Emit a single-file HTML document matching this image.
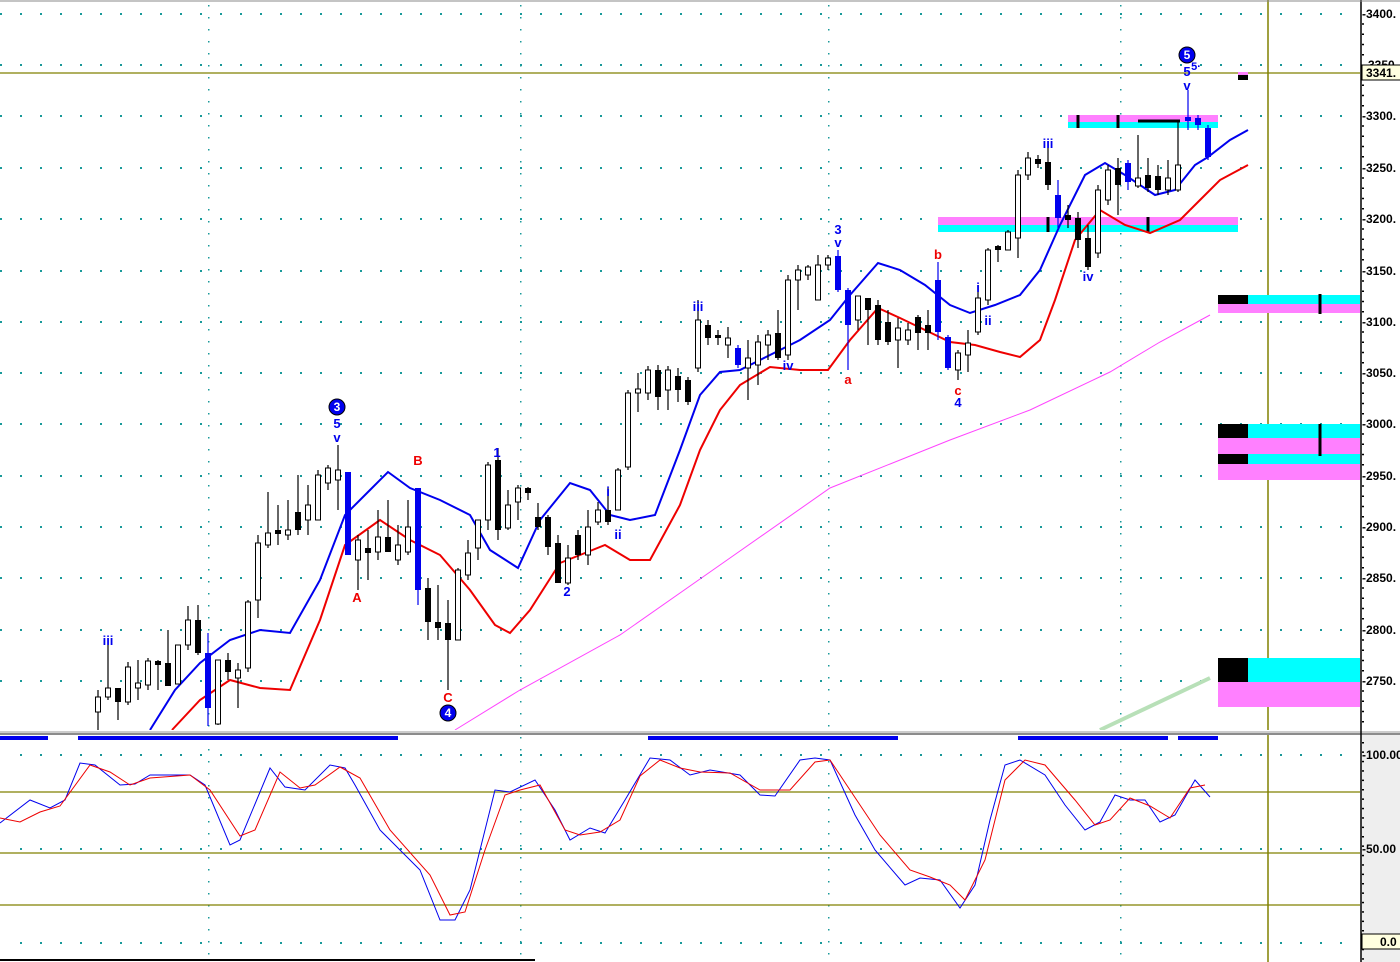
<!DOCTYPE html>
<html><head><meta charset="utf-8"><style>
html,body{margin:0;padding:0;background:#fff;}
svg{display:block;font-family:"Liberation Sans",sans-serif;}
</style></head><body>
<svg id="s" width="1400" height="962" xmlns="http://www.w3.org/2000/svg">
<defs>
<pattern id="dh" width="20" height="2" patternUnits="userSpaceOnUse"><rect x="0" y="0" width="2" height="2" fill="#1a9a9a"/></pattern>
</defs>
<rect x="0" y="0" width="1400" height="962" fill="#fff"/>
<rect x="1361" y="735" width="39" height="227" fill="#eeeeee"/>
<g id="grid"></g>
<line x1="1268" y1="0" x2="1268" y2="962" stroke="#808000" stroke-width="1.5"/>
<line x1="0" y1="73" x2="1360" y2="73" stroke="#808000" stroke-width="1.2"/>
<line x1="0" y1="792" x2="1360" y2="792" stroke="#808000" stroke-width="1.2"/>
<line x1="0" y1="853" x2="1360" y2="853" stroke="#808000" stroke-width="1.2"/>
<line x1="0" y1="905" x2="1360" y2="905" stroke="#808000" stroke-width="1.2"/>
<!-- zones -->
<rect x="1068" y="115" width="150" height="7" fill="#ff80ff"/><rect x="1068" y="122" width="150" height="6" fill="#00ffff"/>
<rect x="938" y="217" width="300" height="8" fill="#ff80ff"/><rect x="938" y="225" width="300" height="7" fill="#00ffff"/>
<rect x="1238" y="72" width="10" height="3" fill="#ff80ff"/><rect x="1238" y="75" width="10" height="5" fill="#000"/>
<rect x="1218" y="295" width="142" height="9" fill="#00ffff"/><rect x="1218" y="295" width="30" height="9" fill="#000"/><rect x="1218" y="304" width="142" height="9" fill="#ff80ff"/>
<rect x="1218" y="424" width="142" height="14" fill="#00ffff"/><rect x="1218" y="424" width="30" height="14" fill="#000"/><rect x="1218" y="438" width="142" height="16" fill="#ff80ff"/>
<rect x="1218" y="454" width="142" height="10" fill="#00ffff"/><rect x="1218" y="454" width="30" height="10" fill="#000"/><rect x="1218" y="464" width="142" height="16" fill="#ff80ff"/>
<rect x="1218" y="658" width="142" height="24" fill="#00ffff"/><rect x="1218" y="658" width="30" height="24" fill="#000"/><rect x="1218" y="682" width="142" height="25" fill="#ff80ff"/>
<line x1="1320" y1="294" x2="1320" y2="314" stroke="#000" stroke-width="3"/>
<line x1="1320" y1="424" x2="1320" y2="456" stroke="#000" stroke-width="3"/>
<g stroke="#000" stroke-width="3"><line x1="1078" y1="115" x2="1078" y2="128"/><line x1="1118" y1="115" x2="1118" y2="128"/><line x1="1048" y1="217" x2="1048" y2="232"/><line x1="1148" y1="217" x2="1148" y2="232"/><line x1="1138" y1="121" x2="1180" y2="121"/></g>
<!-- MAs -->
<polyline fill="none" stroke="#ff44ff" stroke-width="1" points="455,730 520,690 620,635 720,565 830,488 950,440 1030,410 1110,372 1160,342 1210,315"/>
<polyline fill="none" stroke="#b8e0b8" stroke-width="4" points="1100,730 1210,678"/>
<polyline fill="none" stroke="#ee0000" stroke-width="2" points="172,730 200,700 230,680 260,688 290,690 320,620 345,545 380,520 410,540 440,555 470,590 495,625 510,633 530,610 560,563 580,555 605,545 630,560 650,560 680,505 700,450 720,410 740,385 770,367 800,370 828,370 850,340 878,308 900,318 925,330 950,342 975,345 1000,352 1020,357 1040,340 1055,300 1075,240 1100,210 1125,225 1150,233 1180,220 1200,200 1220,180 1248,165"/>
<polyline fill="none" stroke="#0000ee" stroke-width="2" points="150,730 175,690 200,663 230,640 260,630 290,633 320,580 345,515 370,490 388,472 410,488 440,500 470,515 490,550 518,568 540,520 570,483 590,490 610,515 630,520 655,515 680,450 700,395 720,372 740,370 770,355 800,340 830,320 850,295 878,263 900,270 925,285 950,305 970,313 995,305 1020,295 1040,270 1060,225 1085,175 1105,163 1125,175 1155,195 1175,190 1195,165 1208,157 1230,140 1248,130"/>
<g id="cd"></g>
<!-- labels -->
<g font-size="13" font-weight="bold" text-anchor="middle" fill="#0000ee">
<text x="108" y="645">iii</text><text x="337" y="428">5</text><text x="337" y="442">v</text>
<text x="497" y="457">1</text><text x="567" y="596">2</text><text x="608" y="496">i</text><text x="618" y="539">ii</text>
<text x="698" y="311">iii</text><text x="788" y="370">iv</text><text x="838" y="234">3</text><text x="838" y="247">v</text>
<text x="958" y="407">4</text><text x="978" y="292">i</text><text x="988" y="325">ii</text><text x="1048" y="148">iii</text><text x="1088" y="281">iv</text>
<text x="1187" y="76">5</text><text x="1196" y="70" font-size="11">5·</text><text x="1187" y="90">v</text>
</g>
<g font-size="13" font-weight="bold" text-anchor="middle" fill="#ee0000">
<text x="357" y="602">A</text><text x="418" y="465">B</text><text x="448" y="702">C</text>
<text x="848" y="384">a</text><text x="938" y="259">b</text><text x="958" y="395">c</text>
</g>
<g font-size="12" font-weight="bold" text-anchor="middle" fill="#fff">
<circle cx="337" cy="407" r="8" fill="#0000ee" stroke="#000"/><text x="337" y="411">3</text>
<circle cx="448" cy="713" r="8" fill="#0000ee" stroke="#000"/><text x="448" y="717">4</text>
<circle cx="1187" cy="55" r="8" fill="#0000ee" stroke="#000"/><text x="1187" y="59">5</text>
</g>
<!-- separator -->
<rect x="0" y="730" width="1360" height="5" fill="#fff"/>
<line x1="0" y1="732" x2="1400" y2="732" stroke="#999" stroke-width="1"/>
<line x1="0" y1="734" x2="1400" y2="734" stroke="#666" stroke-width="1.5"/>
<g fill="#0000ee"><rect x="0" y="736" width="48" height="4"/><rect x="78" y="736" width="320" height="4"/><rect x="648" y="736" width="250" height="4"/><rect x="1018" y="736" width="150" height="4"/><rect x="1178" y="736" width="40" height="4"/></g>
<!-- stochastic -->
<polyline id="sb" fill="none" stroke="#0000ee" stroke-width="1" points="0,823 30,800 50,808 65,800 80,763 95,765 120,785 135,784 150,775 190,775 205,785 230,845 240,840 270,768 285,787 305,790 330,765 345,768 355,785 380,830 420,870 440,920 455,920 470,890 495,790 510,792 535,780 555,810 570,840 590,828 605,833 625,800 650,758 670,760 690,775 710,770 740,775 760,795 775,796 800,760 815,758 830,760 855,815 875,850 905,885 920,878 940,880 960,908 975,885 990,820 1005,765 1020,760 1045,775 1065,805 1085,830 1100,822 1115,795 1130,800 1145,800 1160,822 1175,815 1195,780 1210,797"/>
<polyline fill="none" stroke="#ee0000" stroke-width="1" points="0,818 20,822 40,812 60,806 90,765 110,772 130,785 150,778 190,775 210,790 240,836 255,830 280,772 300,788 315,785 340,767 360,778 390,830 430,875 450,915 465,912 485,850 505,795 520,790 540,785 565,830 580,835 600,832 620,820 640,776 660,760 680,768 700,772 730,773 760,790 790,790 815,762 830,760 850,790 880,835 910,870 930,877 950,885 965,900 985,860 1005,780 1025,760 1045,765 1075,800 1095,825 1110,820 1130,798 1150,806 1170,818 1190,788 1205,785"/>
<line x1="0" y1="960" x2="535" y2="960" stroke="#000" stroke-width="2"/>
<!-- axis -->
<line x1="1361" y1="0" x2="1361" y2="962" stroke="#000" stroke-width="1.5"/>
<line x1="0" y1="1" x2="1400" y2="1" stroke="#888" stroke-width="1"/>
<g id="ax" font-size="12" font-weight="bold" fill="#000"></g>
<rect x="1362" y="65" width="40" height="15" fill="#ffffe0" stroke="#000"/>
<text x="1366" y="77" font-size="12" font-weight="bold">3341.</text>
<rect x="1362" y="934" width="40" height="15" fill="#ffffe0" stroke="#000"/>
<text x="1380" y="946" font-size="12" font-weight="bold">0.0</text>
</svg>
<script>
var NS="http://www.w3.org/2000/svg";
function el(p,t,a){var e=document.createElementNS(NS,t);for(var k in a)e.setAttribute(k,a[k]);p.appendChild(e);return e;}
var g=document.getElementById('grid');
var ys=[13,64,115,167,218,270,321,372,423,475,526,577,629,680];
ys.forEach(function(y){el(g,'rect',{x:0,y:y,width:1360,height:2,fill:'url(#dh)'});});
[754,848,942].forEach(function(y){el(g,'rect',{x:8,y:y,width:1352,height:2,fill:'url(#dh)'});});
for(var i=0;i<4;i++){var x=[208,520,828,1120][i];for(var y=5;y<962;y+=12)el(g,'rect',{x:x,y:y,width:1.5,height:1.5,fill:'#1a9a9a'});}
var ax=document.getElementById('ax');
var lab=['3400.','3350.','3300.','3250.','3200.','3150.','3100.','3050.','3000.','2950.','2900.','2850.','2800.','2750.'];
ys.forEach(function(y,i){if(i!=1)el(ax,'text',{x:1362,y:y+5}).textContent='-'+lab[i];else el(ax,'text',{x:1368,y:y+5}).textContent='3350';
for(var k=1;k<5;k++)el(ax,'rect',{x:1362,y:y+k*10.25,width:2,height:1.5,fill:'#000'});});
[[754,'-100.00'],[848,'-50.00']].forEach(function(a){el(ax,'text',{x:1362,y:a[0]+5}).textContent=a[1];});
for(var y=742;y<962;y+=9.4)el(ax,'rect',{x:1362,y:y,width:2,height:1.5,fill:'#000'});
// x,hi,lo,bodyTop,bodyBot,type (0 hollow,1 black,2 blue)
var C=[[98,690,730,697,712,0],[108,645,700,688,697,0],[118,688,720,688,702,1],[128,662,705,667,702,0],[138,660,700,683,688,0],[148,658,690,661,685,0],[158,660,690,661,665,1],[168,630,680,663,686,1],[178,645,680,645,684,0],[188,606,650,620,645,0],[198,605,655,620,653,1],[208,633,726,653,708,2],[218,660,725,660,724,0],[228,653,680,660,672,1],[238,663,708,670,678,0],[248,600,672,602,668,0],[258,535,618,543,600,0],[268,492,548,533,545,0],[278,505,545,530,534,1],[288,500,540,530,535,0],[298,475,535,512,530,1],[308,485,535,505,520,0],[318,470,510,475,520,0],[328,465,490,468,483,0],[338,445,510,470,480,0],[348,472,555,472,555,2],[358,535,590,540,560,0],[368,530,580,548,553,1],[378,510,560,537,552,0],[388,500,550,537,552,1],[398,525,565,545,560,0],[408,500,555,527,552,0],[418,488,605,488,590,2],[428,578,640,588,622,1],[438,585,640,622,628,1],[448,600,690,623,640,1],[458,568,640,570,640,0],[468,540,580,553,575,0],[478,520,560,520,548,0],[488,462,530,465,520,0],[498,448,540,460,530,1],[508,490,530,505,528,0],[518,485,520,488,502,0],[528,487,500,488,493,1],[538,503,530,517,527,1],[548,515,555,517,547,1],[558,535,583,543,583,1],[568,545,585,558,583,0],[578,530,560,535,555,1],[588,510,565,527,555,0],[598,502,525,510,522,0],[608,488,525,510,522,1],[618,468,510,470,510,0],[628,390,470,393,467,0],[638,373,412,389,393,0],[648,366,400,370,393,0],[658,365,410,370,397,1],[668,366,410,370,390,0],[678,368,402,376,390,1],[688,377,405,380,402,1],[698,300,372,320,368,0],[708,320,345,325,338,1],[718,330,345,335,338,1],[728,327,358,338,345,0],[738,345,368,348,365,2],[748,340,400,358,368,0],[758,335,385,342,365,0],[768,330,360,335,345,0],[778,310,360,333,358,1],[788,275,360,280,355,0],[798,265,310,270,280,0],[808,265,280,267,275,0],[818,255,300,265,300,0],[828,255,270,258,265,0],[838,250,292,256,290,2],[848,288,370,290,325,2],[858,296,330,296,320,0],[868,298,345,298,310,1],[878,300,345,305,340,1],[888,310,345,322,342,1],[898,318,368,328,340,0],[908,323,345,330,340,0],[918,315,350,317,333,1],[928,310,350,325,333,1],[938,262,340,280,332,2],[948,335,370,337,368,2],[958,350,380,353,370,0],[968,330,372,343,355,0],[978,285,335,298,332,0],[988,248,305,250,300,0],[998,245,262,246,250,1],[1008,230,250,232,250,0],[1018,170,258,175,238,0],[1028,152,180,158,175,0],[1038,155,168,159,164,1],[1048,148,190,162,185,1],[1058,180,228,195,218,2],[1068,205,228,215,220,1],[1078,212,248,218,240,1],[1088,225,270,238,267,1],[1098,185,258,190,253,0],[1108,165,205,170,200,0],[1118,158,215,168,185,1],[1128,160,190,163,182,2],[1138,135,188,178,186,0],[1148,158,192,175,188,1],[1158,165,195,176,190,1],[1168,160,195,178,190,0],[1178,120,192,165,190,0],[1188,90,130,117,121,2],[1198,115,130,118,125,2],[1208,125,160,128,157,2]];
var cd=document.getElementById('cd');
C.forEach(function(c){var col=c[5]==2?'#0000ee':'#000';
el(cd,'line',{x1:c[0],y1:c[1],x2:c[0],y2:c[2],stroke:col,'stroke-width':1.2});
var h=Math.max(2,c[4]-c[3]);
if(c[5]==0)el(cd,'rect',{x:c[0]-2.5,y:c[3],width:5,height:h,fill:'#fff',stroke:'#000','stroke-width':1});
else el(cd,'rect',{x:c[0]-3,y:c[3],width:6,height:h,fill:col});});
</script>
</body></html>
